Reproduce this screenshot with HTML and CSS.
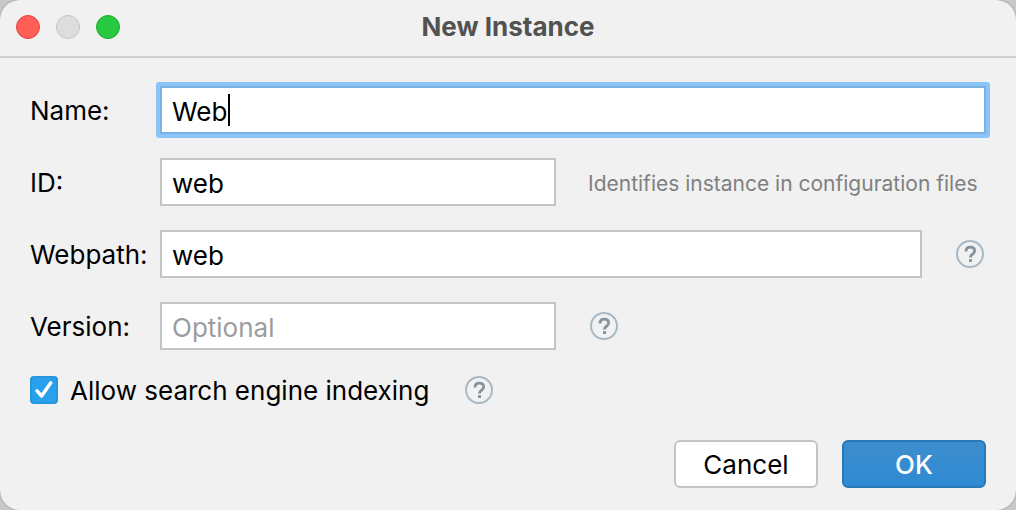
FILE: index.html
```html
<!DOCTYPE html>
<html lang="en">
<head>
<meta charset="utf-8">
<title>New Instance</title>
<link rel="stylesheet" href="styles.css">
</head>
<body>
<svg class="symbols" aria-hidden="true">
  <symbol id="help" viewBox="0 0 28 28">
    <circle cx="14" cy="14" r="13" fill="none" stroke="#a9b9c3" stroke-width="2"/>
    <path d="M10 11.6C10 8.6 11.6 7.2 14.2 7.2C16.9 7.2 18.6 8.6 18.6 10.9C18.6 12.6 17.6 13.5 16.4 14.4C15.1 15.4 14.4 15.9 14.4 17.6" fill="none" stroke="#84929b" stroke-width="2.8"/>
    <rect x="13" y="19.2" width="3" height="2.8" fill="#84929b"/>
  </symbol>
</svg>
<main class="dialog">
  <header class="titlebar">
    <div class="lights">
      <button class="light light-close" type="button" aria-label="Close"></button>
      <button class="light light-minimize" type="button" aria-label="Minimize" disabled></button>
      <button class="light light-zoom" type="button" aria-label="Zoom"></button>
    </div>
    <h1 class="title">New Instance</h1>
  </header>
  <form class="form">
    <div class="row">
      <label class="label" for="name">Name:</label>
      <div class="field field-active">
        <input class="input" id="name" type="text" value="Web">
        <span class="caret"></span>
      </div>
    </div>
    <div class="row">
      <label class="label" for="id">ID:</label>
      <div class="field"><input class="input" id="id" type="text" value="web"></div>
      <p class="side hint">Identifies instance in configuration files</p>
    </div>
    <div class="row">
      <label class="label" for="webpath">Webpath:</label>
      <div class="field"><input class="input" id="webpath" type="text" value="web"></div>
      <button class="help" type="button" aria-label="Webpath help"><svg class="help-icon"><use href="#help"/></svg></button>
    </div>
    <div class="row">
      <label class="label" for="version">Version:</label>
      <div class="field"><input class="input" id="version" type="text" placeholder="Optional"></div>
      <div class="side"><button class="help" type="button" aria-label="Version help"><svg class="help-icon"><use href="#help"/></svg></button></div>
    </div>
    <div class="check-row">
      <span class="check">
        <input class="checkbox" id="indexing" type="checkbox" checked>
        <svg class="tick" viewBox="0 0 28 28" aria-hidden="true"><path d="M7 14.8L11.6 20L20.8 6.8" fill="none" stroke="#fff" stroke-width="3.4" stroke-linecap="round" stroke-linejoin="round"/></svg>
      </span>
      <label class="check-label" for="indexing">Allow search engine indexing</label>
      <button class="help" type="button" aria-label="Indexing help"><svg class="help-icon"><use href="#help"/></svg></button>
    </div>
    <div class="actions">
      <button class="button" type="button">Cancel</button>
      <button class="button button-primary" type="submit">OK</button>
    </div>
  </form>
</main>
</body>
</html>
```

FILE: styles.css
```css
* { box-sizing: border-box; }
body {
  margin: 0;
  background: #c8c8c8;
  color: #000;
  font: 26px/32px Inter, "Liberation Sans", sans-serif;
}
.symbols { position: absolute; width: 0; height: 0; }
.dialog {
  min-height: 100vh;
  background: #f1f1f1;
  border-radius: 20px;
  box-shadow: 0 0 2px #888;
}
.titlebar {
  display: grid;
  grid-template-columns: 1fr auto 1fr;
  align-items: center;
  height: 58px;
  padding: 0 16px 2px;
  border-bottom: 2px solid #cfcfcf;
}
.lights { display: flex; gap: 16px; }
.light {
  width: 24px;
  height: 24px;
  padding: 0;
  border: 1px solid;
  border-radius: 50%;
}
.light-close { background: #ff5f57; border-color: #e2463f; }
.light-minimize { background: #dddddd; border-color: #c3c3c3; }
.light-zoom { background: #28c840; border-color: #1dad2b; }
.title {
  margin: 0;
  color: #525252;
  font-size: 26px;
  font-weight: 700;
  line-height: 32px;
}
.form {
  display: flex;
  flex-direction: column;
  gap: 24px;
  padding: 28px 30px 22px;
}
.row { display: flex; align-items: center; height: 48px; }
.label { flex: none; width: 130px; padding-top: 2px; white-space: nowrap; }
.field { position: relative; flex: 1; height: 48px; }
.input {
  display: block;
  width: 100%;
  height: 100%;
  padding: 2px 10px 0;
  border: 2px solid #c4c4c4;
  border-radius: 0;
  outline: none;
  background: #fff;
  color: inherit;
  font: inherit;
}
.input::placeholder { color: #9c9c9c; opacity: 1; }
.field-active .input { border-color: #7bb0df; box-shadow: 0 0 0 4px #8bc4f8; border-radius: 1px; }
.caret {
  position: absolute;
  top: 8px;
  left: 68px;
  width: 2px;
  height: 32px;
  background: #000;
}
.side { display: flex; flex: none; width: 430px; padding-left: 34px; }
.hint {
  margin: 0;
  padding: 4px 0 0 32px;
  color: #808080;
  font-size: 21px;
  white-space: nowrap;
}
.help {
  flex: none;
  width: 28px;
  height: 28px;
  padding: 0;
  border: 0;
  background: none;
}
.row > .help { margin: 0 2px 0 34px; }
.help-icon { display: block; width: 28px; height: 28px; }
.check-row { display: flex; align-items: center; height: 32px; }
.check { position: relative; width: 28px; height: 28px; margin-right: 12px; }
.checkbox {
  appearance: none;
  display: block;
  width: 28px;
  height: 28px;
  margin: 0;
  border: 2px solid #2696de;
  border-radius: 4px;
  background: #28a0ec;
}
.tick { position: absolute; inset: 0; pointer-events: none; }
.check-label { margin-right: 36px; padding-top: 2px; }
.actions { display: flex; justify-content: flex-end; gap: 24px; padding-top: 10px; }
.button {
  width: 144px;
  height: 48px;
  padding: 2px 0 0;
  border: 2px solid #c4c4c4;
  border-radius: 6px;
  background: #fff;
  color: #000;
  font: inherit;
}
.button-primary {
  border-color: #2679b8;
  background: linear-gradient(#3d8dcd, #2e8bd3);
  color: #fff;
  font-weight: 500;
}
```
